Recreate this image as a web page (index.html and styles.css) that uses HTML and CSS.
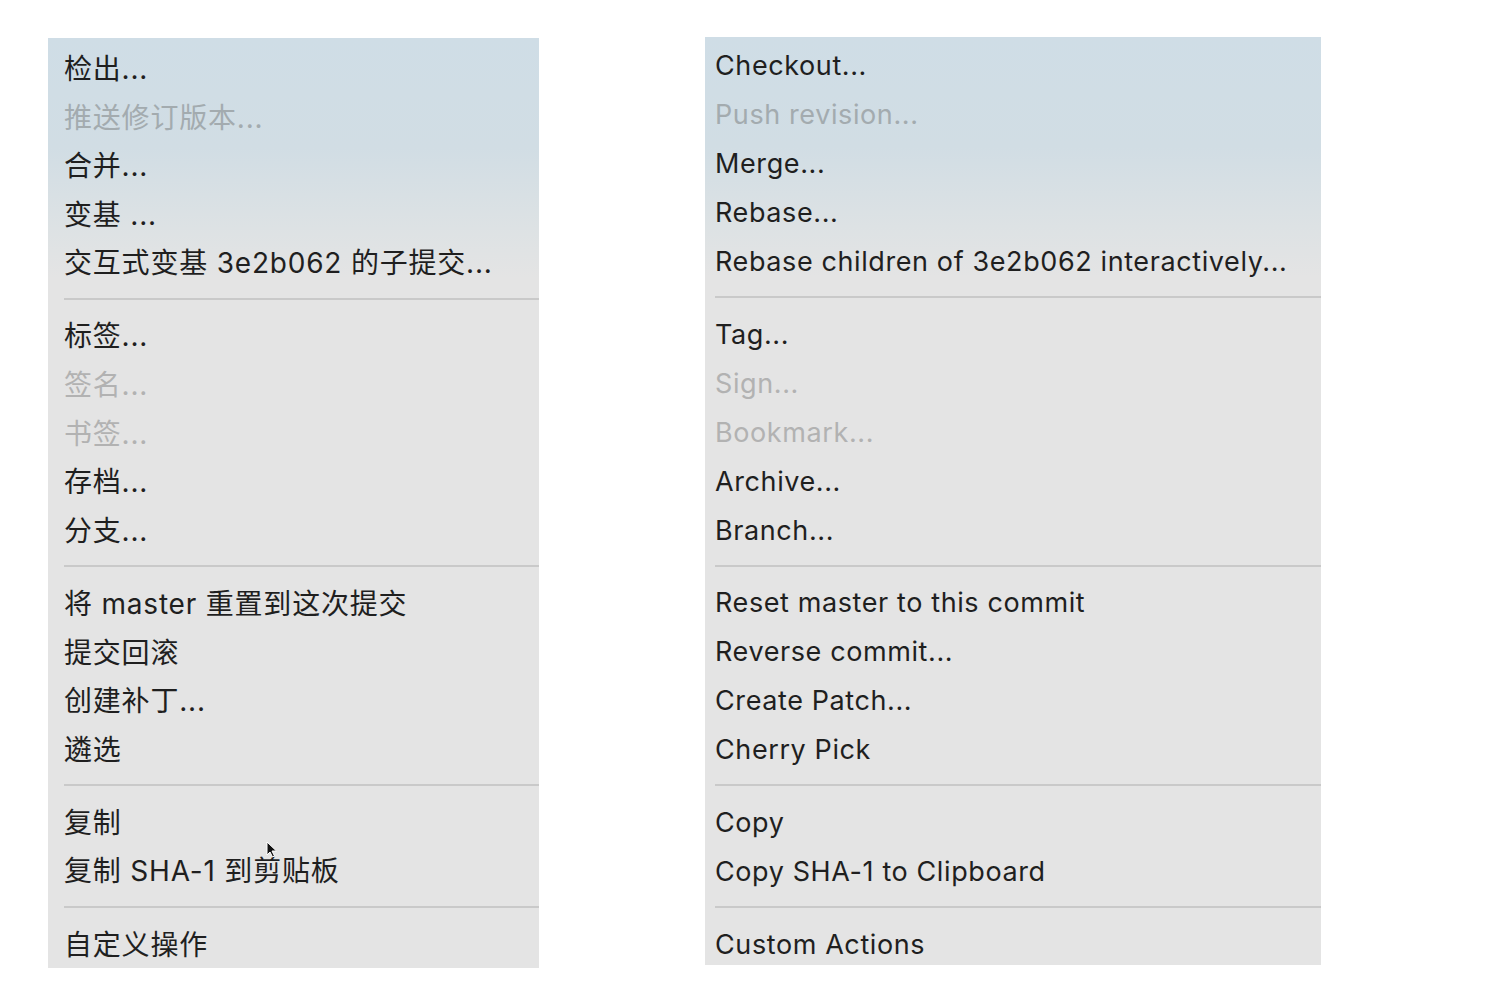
FILE: index.html
```html
<!DOCTYPE html>
<html lang="zh">
<head>
<meta charset="utf-8">
<title>Context menus</title>
<link rel="stylesheet" href="styles.css">
</head>
<body>
<div class="stage">
  <div class="menu menu-zh">
    <div class="item">检出...</div>
    <div class="item disabled">推送修订版本...</div>
    <div class="item">合并...</div>
    <div class="item">变基 ...</div>
    <div class="item">交互式变基 3e2b062 的子提交...</div>
    <div class="sep"></div>
    <div class="item">标签...</div>
    <div class="item disabled">签名...</div>
    <div class="item disabled">书签...</div>
    <div class="item">存档...</div>
    <div class="item">分支...</div>
    <div class="sep"></div>
    <div class="item">将 master 重置到这次提交</div>
    <div class="item">提交回滚</div>
    <div class="item">创建补丁...</div>
    <div class="item">遴选</div>
    <div class="sep"></div>
    <div class="item">复制</div>
    <div class="item cursor-host">复制 SHA-1 到剪贴板<svg class="cursor" width="12" height="17" viewBox="0 0 12 17"><path d="M1 1 L1 14 L4 11 L6.5 16 L8.5 15 L6 10 L10.5 10 Z" fill="#111" stroke="#fff" stroke-width="1"/></svg></div>
    <div class="sep"></div>
    <div class="item">自定义操作</div>
  </div>
  <div class="menu menu-en">
    <div class="item">Checkout...</div>
    <div class="item disabled">Push revision...</div>
    <div class="item">Merge...</div>
    <div class="item">Rebase...</div>
    <div class="item">Rebase children of 3e2b062 interactively...</div>
    <div class="sep"></div>
    <div class="item">Tag...</div>
    <div class="item disabled">Sign...</div>
    <div class="item disabled">Bookmark...</div>
    <div class="item">Archive...</div>
    <div class="item">Branch...</div>
    <div class="sep"></div>
    <div class="item">Reset master to this commit</div>
    <div class="item">Reverse commit...</div>
    <div class="item">Create Patch...</div>
    <div class="item">Cherry Pick</div>
    <div class="sep"></div>
    <div class="item">Copy</div>
    <div class="item">Copy SHA-1 to Clipboard</div>
    <div class="sep"></div>
    <div class="item">Custom Actions</div>
  </div>
</div>
</body>
</html>
```
FILE: styles.css
```css
html, body {
  margin: 0;
  padding: 0;
  background: #ffffff;
}
.stage {
  display: flex;
  align-items: flex-start;
  padding: 37px 0 0 48px;
  gap: 166px;
}
.menu {
  background: linear-gradient(to bottom, #cfdde6 0px, #d1dde4 110px, #dde2e4 190px, #e4e4e4 240px, #e4e4e4 100%);
  color: #1f1f1f;
  overflow: hidden;
  -webkit-font-smoothing: antialiased;
}
.menu-zh {
  width: 491px;
  height: 930px;
  margin-top: 1px;
  padding-top: 7px;
  box-sizing: border-box;
  font-family: "Inter", "Noto Sans CJK SC", sans-serif;
  font-size: 28px;
  letter-spacing: 0.8px;
}
.menu-en {
  width: 616px;
  height: 928px;
  padding-top: 4px;
  box-sizing: border-box;
  font-family: "Inter", sans-serif;
  font-size: 27px;
  letter-spacing: 0.6px;
}
.item {
  height: 48.6px;
  line-height: 48.6px;
  white-space: nowrap;
}
.menu-zh .item { padding-left: 16px; }
.menu-en .item { padding-left: 10px; height: 49px; line-height: 49px; }
.item.disabled { color: #a3abaf; }
.menu .sep ~ .item.disabled { color: #b2b2b2; }
.sep {
  height: 24.5px;
  display: flex;
  align-items: flex-start;
  padding-top: 10px;
  box-sizing: border-box;
}
.menu-en .sep { height: 23.7px; }
.sep::before {
  content: "";
  flex: 1;
  height: 2px;
  background: #c9c9c9;
}
.menu-zh .sep { padding-left: 16px; }
.menu-en .sep { padding-left: 10px; }
.cursor-host { position: relative; }
.cursor {
  position: absolute;
  left: 218px;
  top: -6px;
}
```
